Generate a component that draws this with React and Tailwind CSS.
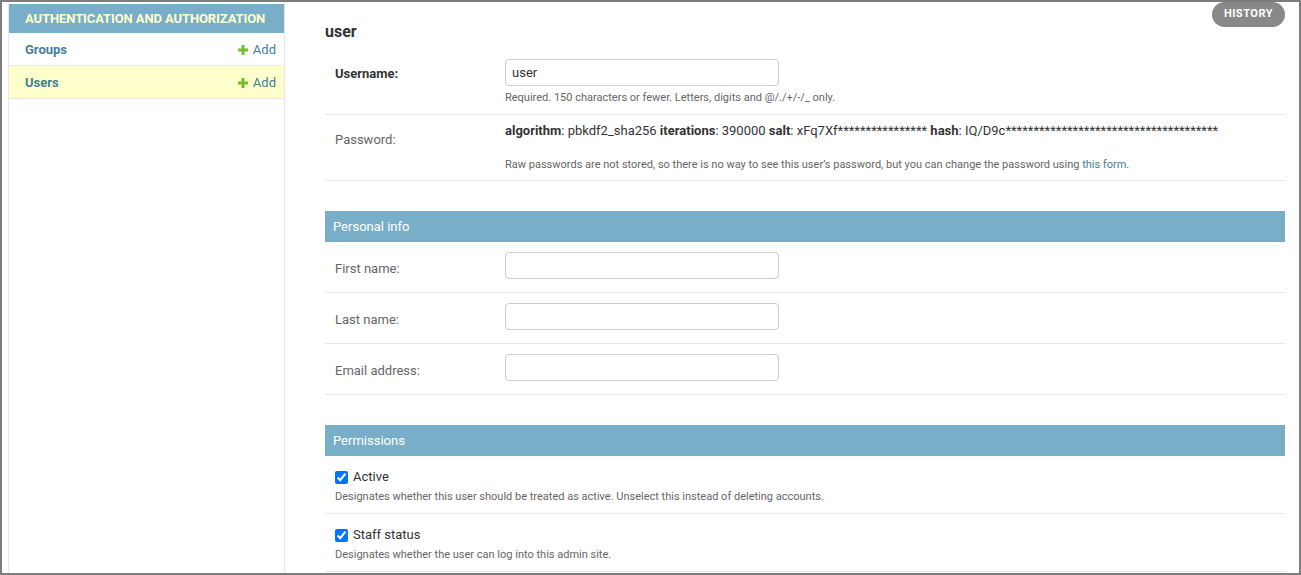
import { useState } from "react";

const LINK = "text-[#447e9b]";

function PlusIcon() {
  return (
    <svg width="10" height="10" viewBox="0 0 10 10" className="shrink-0">
      <rect x="0" y="3.5" width="10" height="3" fill="#70bf2b" />
      <rect x="3.5" y="0" width="3" height="10" fill="#70bf2b" />
    </svg>
  );
}

function SidebarRow({ name, selected }) {
  return (
    <div
      className={`h-[33px] pt-[2px] border-b border-[#e8e8e8] flex items-center justify-between pl-4 pr-2 text-[13px] ${
        selected ? "bg-[#ffffcc]" : "bg-white"
      }`}
    >
      <a className={`${LINK} font-bold`}>{name}</a>
      <a className={`${LINK} flex items-center gap-[5px]`}>
        <PlusIcon />
        Add
      </a>
    </div>
  );
}

function TextRow({ label, required, value, help }) {
  const [val, setVal] = useState(value || "");
  return (
    <div className={`flex pl-[10px] pt-[10px] border-b border-[#e8e8e8] ${help ? "pb-[10px]" : "pb-[13px]"}`}>
      <label
        className={`w-[170px] shrink-0 text-[13px] leading-[16px] ${
          required ? "font-bold text-[#333]" : "text-[#666]"
        } ${help ? "pt-[7px]" : "pt-[9px]"}`}
      >
        {label}
      </label>
      <div>
        <input
          value={val}
          onChange={(e) => setVal(e.target.value)}
          className="w-[274px] h-[27px] border border-[#cccccc] rounded-[4px] px-[6px] text-[13px] text-[#333] outline-none"
        />
        {help && <div className="mt-[5px] text-[11px] leading-[13px] text-[#666]">{help}</div>}
      </div>
    </div>
  );
}

function CheckRow({ label, help }) {
  return (
    <div className="pl-[10px] pt-[11px] pb-[10px] border-b border-[#e8e8e8]">
      <label className="flex items-center h-[20px] text-[13px] text-[#333]">
        <input type="checkbox" defaultChecked className="m-0 w-[13px] h-[13px]" />
        <span className="ml-[5px]">{label}</span>
      </label>
      <div className="mt-[3px] text-[11px] leading-[13px] text-[#666]">{help}</div>
    </div>
  );
}

function SectionHeader({ title }) {
  return (
    <h2 className="mt-[30px] h-[31px] bg-[#79aec8] px-2 flex items-center text-[13px] text-white">{title}</h2>
  );
}

export default function App() {
  return (
    <div className="w-[1301px] h-[575px] border-2 border-[#7d7d7d] bg-white flex overflow-hidden font-['Roboto',sans-serif]">
      <aside className="ml-[6px] w-[277px] shrink-0 border-l border-r border-[#e8e8e8] pt-[2px]">
        <div className="h-[29px] bg-[#79aec8] pl-4 flex items-center text-[13px] font-bold text-[#ffffcc] uppercase tracking-[-0.1px]">
          Authentication and Authorization
        </div>
        <SidebarRow name="Groups" />
        <SidebarRow name="Users" selected />
      </aside>

      <main className="flex-1 pl-[40px] pr-[14px]">
        <div className="flex justify-between items-start">
          <h2 className="mt-[20px] text-[16px] leading-[20px] font-bold text-[#333]">user</h2>
          <a className="h-[25px] px-3 rounded-full bg-[#888888] text-white text-[11px] font-bold tracking-[0.5px] flex items-center">
            HISTORY
          </a>
        </div>

        <div className="mt-[7px]">
          <TextRow
            label="Username:"
            required
            value="user"
            help="Required. 150 characters or fewer. Letters, digits and @/./+/-/_ only."
          />
          <div className="flex pl-[10px] pt-[10px] pb-[9px] border-b border-[#e8e8e8]">
            <label className="w-[170px] shrink-0 pt-[7px] text-[13px] leading-[16px] text-[#666]">Password:</label>
            <div>
              <div className="-mt-[2px] text-[13px] leading-[16px] text-[#333]">
                <strong>algorithm</strong>: pbkdf2_sha256 <strong>iterations</strong>: 390000{" "}
                <strong>salt</strong>: xFq7Xf**************** <strong>hash</strong>:
                IQ/D9c**************************************
              </div>
              <div className="mt-[19px] text-[11px] leading-[13px] text-[#666]">
                Raw passwords are not stored, so there is no way to see this user’s password, but you can change the
                password using <a className={LINK}>this form</a>.
              </div>
            </div>
          </div>
        </div>

        <SectionHeader title="Personal info" />
        <TextRow label="First name:" />
        <TextRow label="Last name:" />
        <TextRow label="Email address:" />

        <SectionHeader title="Permissions" />
        <CheckRow
          label="Active"
          help="Designates whether this user should be treated as active. Unselect this instead of deleting accounts."
        />
        <CheckRow label="Staff status" help="Designates whether the user can log into this admin site." />
      </main>
    </div>
  );
}
